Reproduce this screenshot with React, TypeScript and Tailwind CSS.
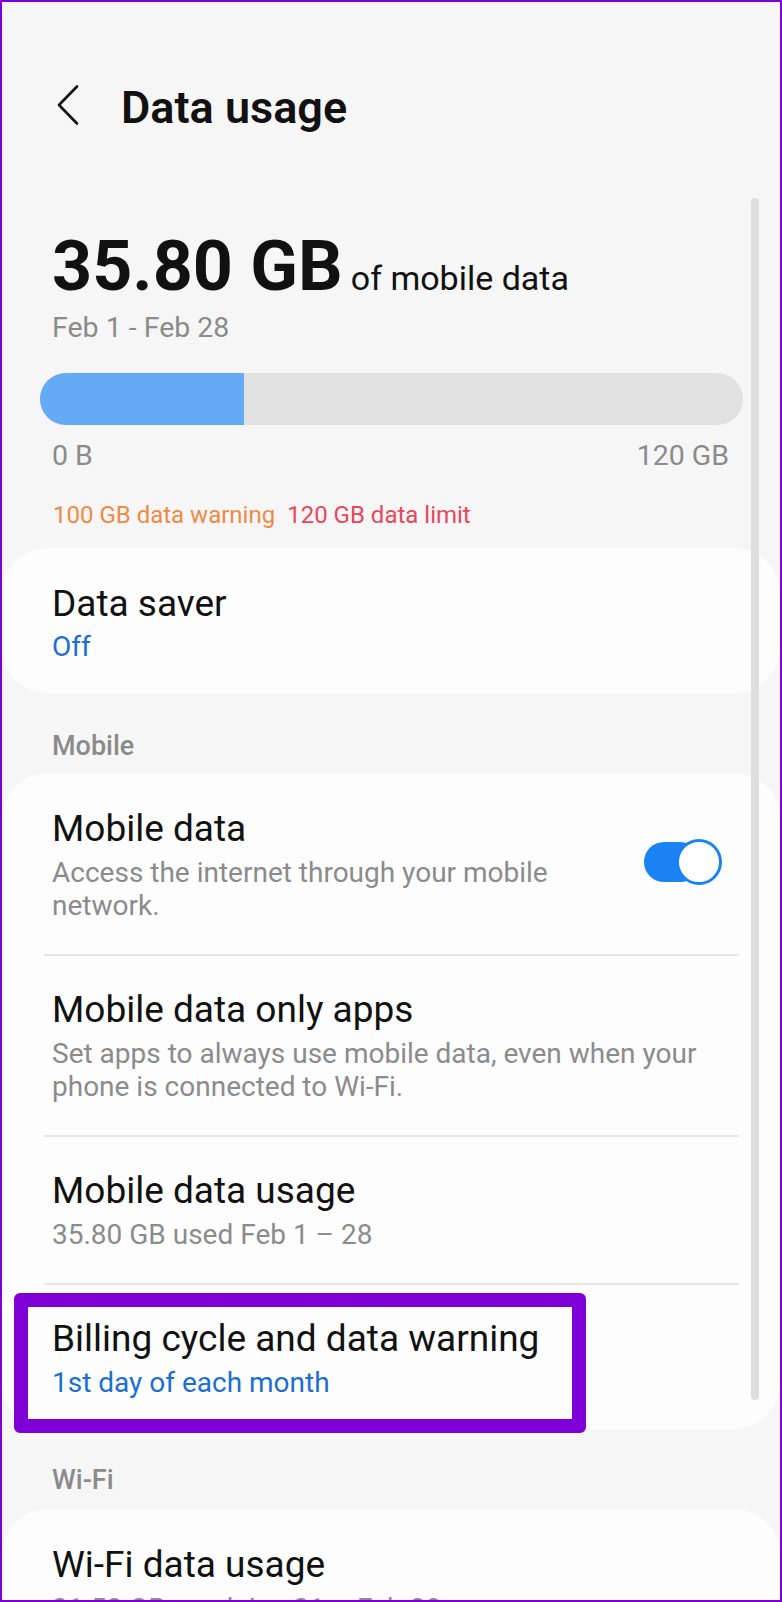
import React from "react";

const Item = ({
  title,
  sub,
  subBlue,
  first,
  last,
  toggle,
}: {
  title: string;
  sub: string;
  subBlue?: boolean;
  first?: boolean;
  last?: boolean;
  toggle?: boolean;
}) => (
  <div className={`flex items-start ${first ? "pt-[34px]" : "pt-[32px]"} ${last ? "pb-[30px]" : "pb-[32px]"}`}>
    <div className={`flex-1 pl-[50px] ${toggle ? "pr-[24px]" : "pr-[50px]"}`}>
      <div className="text-[37px] leading-[44px] text-[#111111]">{title}</div>
      <div
        className={`mt-[5px] text-[28px] leading-[33px] ${subBlue ? "text-[#1a6fd1]" : "text-[#8b8b8b]"}`}
      >
        {sub}
      </div>
    </div>
    {toggle && (
      <div className="relative mt-[32px] mr-[58px] h-[46px] w-[78px] shrink-0">
        <div className="absolute left-0 top-[3px] h-[40px] w-[56px] rounded-full bg-[#1a82f2]" />
        <div className="absolute right-0 top-0 h-[46px] w-[46px] rounded-full border-[3px] border-[#1a82f2] bg-white" />
      </div>
    )}
  </div>
);

const Divider = () => <div className="ml-[42px] mr-[41px] h-[2px] bg-[#e6e6e6]" />;

export default function App() {
  return (
    <div className="relative h-[1602px] w-[782px] overflow-hidden border-2 border-[#7e00d6] bg-[#f6f6f6] font-['Roboto','Liberation_Sans',sans-serif]">
      {/* Header */}
      <div className="flex items-start pl-[53px] pt-[81px]">
        <svg width="26" height="44" viewBox="0 0 26 44" fill="none">
          <path d="M22 3.5 L4 22 L22 40.5" stroke="#111" strokeWidth="2.6" strokeLinecap="round" strokeLinejoin="round" />
        </svg>
        <div className="ml-[40px] mt-[2px] text-[45px] font-semibold leading-[45px] text-[#111111]">Data usage</div>
      </div>

      {/* Big number */}
      <div className="mt-[101px] flex h-[70px] items-baseline pl-[50px]">
        <span className="text-[70px] font-bold leading-[70px] text-[#111111]">35.80 GB</span>
        <span className="ml-[8px] text-[34px] leading-none text-[#111111]">of mobile data</span>
      </div>
      <div className="mt-[10px] pl-[50px] text-[28.5px] leading-[34px] text-[#8b8b8b]">Feb 1 - Feb 28</div>

      {/* Progress */}
      <div className="ml-[38px] mr-[37px] mt-[28px] flex h-[52px] overflow-hidden rounded-full bg-[#e1e1e1]">
        <div className="h-full w-[204px] bg-[#64aaf5]" />
      </div>
      <div className="mt-[14px] flex justify-between pl-[50px] pr-[51px] text-[28.5px] leading-[34px] text-[#8b8b8b]">
        <span>0 B</span>
        <span>120 GB</span>
      </div>
      <div className="mt-[27px] flex pl-[51px] text-[24px] leading-[30px]">
        <span className="text-[#ef8a45]">100 GB data warning</span>
        <span className="ml-[12px] text-[#e9475a]">120 GB data limit</span>
      </div>

      {/* Data saver card */}
      <div className="mt-[18px] rounded-[46px] bg-[#fdfdfd] pb-[29px] pl-[50px] pt-[34px]">
        <div className="text-[37px] leading-[44px] text-[#111111]">Data saver</div>
        <div className="mt-[4px] text-[28px] leading-[34px] text-[#1a6fd1]">Off</div>
      </div>

      {/* Mobile section */}
      <div className="mt-[36px] pl-[50px] text-[27px] font-medium leading-[34px] text-[#8b8b8b]">Mobile</div>
      <div className="mt-[10px] rounded-[46px] bg-[#fdfdfd]">
        <Item first toggle title="Mobile data" sub="Access the internet through your mobile network." />
        <Divider />
        <Item
          title="Mobile data only apps"
          sub="Set apps to always use mobile data, even when your phone is connected to Wi-Fi."
        />
        <Divider />
        <Item title="Mobile data usage" sub="35.80 GB used Feb 1 – 28" />
        <Divider />
        <Item last subBlue title="Billing cycle and data warning" sub="1st day of each month" />
      </div>

      {/* Wi-Fi section */}
      <div className="mt-[34px] pl-[50px] text-[27px] font-medium leading-[34px] text-[#8b8b8b]">Wi-Fi</div>
      <div className="mt-[12px] rounded-[46px] bg-[#fdfdfd]">
        <Item first title="Wi-Fi data usage" sub="31.53 GB used Jan 31 – Feb 28" />
      </div>

      {/* Scrollbar */}
      <div className="absolute left-[749px] top-[196px] h-[1202px] w-[8px] rounded-full bg-[#dedede]" />

      {/* Highlight annotation */}
      <div className="absolute left-[12px] top-[1291px] h-[140px] w-[572px] rounded-[6px] border-[14px] border-[#7e00d6]" />
    </div>
  );
}
